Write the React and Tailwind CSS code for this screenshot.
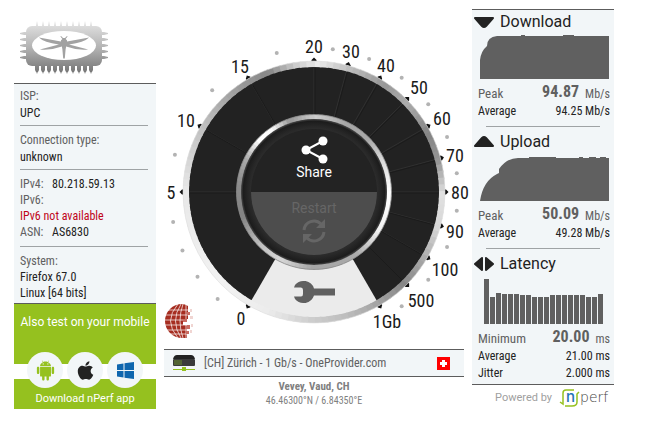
import { AiFillAndroid } from 'react-icons/ai';
import { FaApple } from 'react-icons/fa';

const CX = 150;
const CY = 192;

const gaugeLabels = [
  { text: '0', angle: 210, x: 77, y: 318 },
  { text: '5', angle: 270, x: 7, y: 192 },
  { text: '10', angle: 300, x: 22, y: 120 },
  { text: '15', angle: 330, x: 76, y: 66 },
  { text: '20', angle: 0, x: 150, y: 46 },
  { text: '30', angle: 15, x: 187, y: 51 },
  { text: '40', angle: 30, x: 222, y: 65 },
  { text: '50', angle: 45, x: 255, y: 87 },
  { text: '60', angle: 60, x: 278, y: 118 },
  { text: '70', angle: 75, x: 291, y: 155 },
  { text: '80', angle: 90, x: 296, y: 192 },
  { text: '90', angle: 105, x: 291, y: 231 },
  { text: '100', angle: 120, x: 281, y: 269 },
  { text: '500', angle: 135, x: 257, y: 300 },
  { text: '1Gb', angle: 150, x: 223, y: 321 },
];

const dotAngles = [222, 234, 246, 258, 285, 315, 345, 7.5, 22.5, 37.5, 52.5, 67.5, 82.5, 97.5, 112.5, 127.5, 142.5];

// [angle, grey level] stops, clockwise from the top
const outerStops = [[0, 236], [15, 190], [32, 150], [45, 172], [62, 132], [75, 150], [90, 225], [105, 215], [120, 170], [135, 135], [150, 165], [165, 190], [180, 205], [200, 236], [225, 242], [270, 232], [300, 190], [320, 160], [338, 135], [350, 200], [360, 236]];
const innerStops = [[0, 205], [25, 165], [45, 170], [65, 220], [90, 255], [120, 240], [145, 170], [180, 165], [205, 215], [225, 190], [250, 130], [275, 140], [295, 170], [312, 255], [325, 250], [340, 150], [360, 205]];

const latency = [45, 27, 31, 30, 30, 30, 29, 29, 27, 27, 27, 29, 29, 29, 29, 29, 29, 27, 27, 30];

function point(angle, r) {
  const a = (angle * Math.PI) / 180;
  return [CX + r * Math.sin(a), CY - r * Math.cos(a)];
}

function level(stops, angle) {
  const i = stops.findIndex(([a]) => a > angle);
  const [a0, v0] = stops[i - 1];
  const [a1, v1] = stops[i];
  return Math.round(v0 + ((v1 - v0) * (angle - a0)) / (a1 - a0));
}

function MetalRing({ r, width, stops }) {
  return [...Array(120)].map((_, i) => {
    const [x1, y1] = point(i * 3 - 0.4, r);
    const [x2, y2] = point(i * 3 + 3.4, r);
    const v = level(stops, i * 3);
    return <path key={i} d={`M${x1} ${y1}A${r} ${r} 0 0 1 ${x2} ${y2}`} stroke={`rgb(${v},${v},${v})`} strokeWidth={width} fill="none" />;
  });
}

function ChipLogo() {
  return (
    <svg width="92" height="60" viewBox="0 0 92 60" aria-label="Chip logo">
      <defs>
        <linearGradient id="chip" x1="0" y1="0" x2="0" y2="60" gradientUnits="userSpaceOnUse">
          <stop offset="0.1" stopColor="#dedede" />
          <stop offset="0.5" stopColor="#b0b0b0" />
          <stop offset="0.9" stopColor="#757575" />
        </linearGradient>
      </defs>
      <g fill="url(#chip)">
        {[...Array(10)].map((_, i) => (
          <path key={i} d={`M${18 + i * 6} 7l1 -5 1 5v45l-1 3 -1 -3zM${17 + i * 6} 47h4v4l-1 2h-2l-1 -2z`} />
        ))}
        {[...Array(5)].map((_, i) => (
          <path key={i} d={`M2 ${14 + i * 6}l4 -1h80l4 1v1l-4 1h-80l-4 -1z`} />
        ))}
        <rect x="8" y="7" width="76" height="40" rx="6" />
      </g>
      <ellipse cx="46" cy="26.500" rx="32" ry="14.500" fill="#fff" />
      <path d="M43 17l2 2h2l2-2 .6.500-2 2.500q2 1 1.500 2.500l22-4q-5 5-20 7l19 5q-11 1-22-3l-.5 3-.8 9h-1.600l-.8-9-.5-3q-11 4-22 3l19-5q-15-2-20-7l22 4q-.5-1.500 1.500-2.500l-2-2.500z" fill="#a2a2a2" />
    </svg>
  );
}

function Wrench() {
  return (
    <svg width="44" height="24" viewBox="0 0 44 24" fill="#606060">
      <path d="M3 5A11 11 0 0 1 22 8.500H43V15.500H22A11 11 0 0 1 3 19L2 16.500H9Q11 16.500 11 14V10Q11 7.500 9 7.500H2Z" />
    </svg>
  );
}

function Globe() {
  return (
    <g transform="translate(18 321)">
      <path d="M0-17A17 17 0 0 0 0 17H5V4H1V-2H6V-15Q3-17 0-17Z" fill="#a62d20" />
      <g stroke="#fff" strokeWidth="0.7" fill="none">
        <path d="M-18-11H9M-18-6H9M-18-1H9M-18 4H9M-18 9H9M-15 13H9" />
        <path d="M-4-17Q-19 0-4 17M-1-17Q-12 0-1 17M1-17Q-5 0 1 17M4-17V17" />
      </g>
      <path d="M1-2h4v3H1zM5-9h3v3H5zM5 4h3v4H5zM4 10h3v3H4z" fill="#c86c62" />
      <path d="M8-12h2v3H8zM8-5h3v3H8zM9 3h2v3H9zM8 9h2v3H8z" fill="#f0d5d2" />
    </g>
  );
}

function Gauge() {
  const [sx, sy] = point(150, 126);
  const [ex, ey] = point(210, 126);
  return (
    <div className="relative mx-auto w-[300px]">
      <svg className="block overflow-visible" width="300" height="349" viewBox="0 0 300 349">
        <defs>
          <linearGradient id="half" x1="0" x2="1">
            <stop offset="0" stopColor="#555" />
            <stop offset="0.4" stopColor="#888" />
            <stop offset="1" stopColor="#555" />
          </linearGradient>
          <radialGradient id="well" cx="150" cy="192" r="73" gradientUnits="userSpaceOnUse">
            <stop offset="0.84" stopColor="#2f2f2f" />
            <stop offset="0.9" stopColor="#272727" />
            <stop offset="0.97" stopColor="#1c1c1c" />
            <stop offset="1" stopColor="#4a4a4a" />
          </radialGradient>
        </defs>
        {gaugeLabels.map((l) => {
          const [x, y] = point(l.angle, 132);
          return (
            <g key={l.text}>
              <path d="M-2.500 0L0-2.500L2.500 0V3H-2.500Z" fill="#111" transform={`translate(${x} ${y}) rotate(${l.angle})`} />
              <text x={l.x} y={l.y + 7} textAnchor="middle" fill="#1a1a1a" className="font-['Roboto_Condensed',Roboto,sans-serif] text-[18px]">{l.text}</text>
            </g>
          );
        })}
        {dotAngles.map((a) => {
          const [x, y] = point(a, 144);
          return <circle key={a} cx={x} cy={y} r="2" fill="#b3b3b3" />;
        })}
        <circle cx={CX} cy={CY} r="127" fill="#222" />
        <path d={`M${CX} ${CY}L${sx} ${sy}A126 126 0 0 1 ${ex} ${ey}Z`} fill="#ebebeb" />
        {gaugeLabels.slice(1, -1).map((l) => {
          const [x, y] = point(l.angle, 125);
          return (
            <g key={l.text}>
              <path d={`M${CX} ${CY}L${x} ${y}`} stroke="#303030" />
              <path d={`M${CX + 1} ${CY + 1}L${x + 1} ${y + 1}`} stroke="#1b1b1b" />
            </g>
          );
        })}
        <MetalRing r={128} width={6} stops={outerStops} />
        <circle cx={CX} cy={CY} r="131" fill="none" stroke="#ddd" strokeWidth="0.6" />
        <MetalRing r={75} width={5} stops={innerStops} />
        <circle cx={CX} cy={CY} r="77.500" fill="none" stroke="#888" strokeWidth="0.8" />
        <circle cx={CX} cy={CY} r="73" fill="url(#well)" />
        <circle cx={CX} cy={CY} r="63" fill="#232323" />
        <path d="M87 192A63 63 0 0 0 213 192Z" fill="#4d4d4d" />
        <path d="M94 191.500H208" stroke="url(#half)" />
        <Globe />
      </svg>
      <button className="absolute left-1/2 top-[136px] flex w-24 -translate-x-1/2 flex-col items-center font-[Roboto,sans-serif] text-sm leading-4 text-white">
        <svg width="28" height="28" viewBox="0 0 28 28" fill="#fff">
          <path d="M23 5L6 14L23 23" fill="none" stroke="#fff" strokeWidth="2" />
          <circle cx="6" cy="14" r="4.500" />
          <circle cx="23" cy="5" r="4.500" />
          <circle cx="23" cy="23" r="4.500" />
        </svg>
        Share
      </button>
      <button className="absolute left-1/2 top-[200px] flex w-24 -translate-x-1/2 flex-col items-center gap-0.5 font-[Roboto,sans-serif] text-sm leading-4 text-[#666]">
        Restart
        <svg width="26" height="26" viewBox="0 0 26 26" fill="none" stroke="#666" strokeWidth="3">
          <path d="M3 12A10 10 0 0 1 20 6M23 14A10 10 0 0 1 6 20" />
          <path d="M24 1V10H15ZM2 25V16H11Z" fill="#666" stroke="none" />
        </svg>
      </button>
      <button aria-label="Settings" className="absolute left-1/2 top-[280px] -translate-x-1/2">
        <Wrench />
      </button>
    </div>
  );
}

function ServerBar() {
  return (
    <div className="flex h-7 items-center border-y border-[#5c5c5c] bg-[#f2f6f8] pl-2 pr-3.5">
      <svg width="24" height="18" viewBox="0 0 24 18">
        <path d="M5 1H19Q22 1 23 5H1Q2 1 5 1Z" fill="#222" />
        <rect x="1" y="5" width="22" height="7" rx="1" fill="#3b3b3b" />
        <path d="M3 6v5M5 6v5M7 6v5M9 6v5" stroke="#6c8f2c" />
        <path d="M1 15.500H23" stroke="#93c11f" />
        <rect x="10" y="13" width="4" height="4" fill="#93c11f" />
      </svg>
      <span className="ml-2 flex-1 text-xs text-[#606060]">[CH] Zürich - 1 Gb/s - OneProvider.com</span>
      <svg width="13" height="13" viewBox="0 0 13 13">
        <rect width="13" height="13" fill="#f00" />
        <path d="M5 3h3v2h2v3h-2v2h-3v-2h-2v-3h2z" fill="#fff" />
      </svg>
    </div>
  );
}

function Divider() {
  return <hr className="border-[#9fa3a5]" />;
}

function Stat({ label, value, unit, big }) {
  if (big) {
    return (
      <div className="flex h-[21px] items-center text-xs text-[#606060]">
        <span className="flex-1 pt-1 text-[13px]">{label}</span>
        <span className="mr-1.5 text-base font-bold">{value}</span>
        <span className="pt-1">{unit}</span>
      </div>
    );
  }
  return (
    <div className="flex h-[17px] items-center justify-between text-xs text-[#222]">
      <span>{label}</span>
      <span>{value} {unit}</span>
    </div>
  );
}

function Heading({ icon, children }) {
  return (
    <h2 className="flex h-6 items-center gap-1.5 pl-0.5 font-[Roboto,sans-serif] text-base text-[#222]">
      <svg width="20" height="16" viewBox="0 0 20 16" fill="#222" stroke="#222" strokeWidth="2" strokeLinejoin="round">
        <path d={icon} />
      </svg>
      {children}
    </h2>
  );
}

function StoreLink({ label, children }) {
  return (
    <a href="#" aria-label={label} className="flex size-9 items-center justify-center rounded-full bg-[#f2f6f8]">
      {children}
    </a>
  );
}

export default function App() {
  return (
    <main className="flex items-start gap-2 bg-white pl-3.5 pr-9 font-['Roboto_Condensed',Roboto,sans-serif] text-[#222]">
      {/* Connection info */}
      <aside className="w-[142px] shrink-0">
        <div className="flex h-[83px] items-end pb-1 pl-1">
          <ChipLogo />
        </div>
        <div className="border-y border-[#5c5c5c] bg-[#f2f6f8] pl-1.5 pr-2 text-xs leading-4">
          <div className="flex flex-col gap-px py-1">
            <p className="text-[#606060]">ISP:</p>
            <p>UPC</p>
          </div>
          <Divider />
          <div className="flex flex-col gap-px pb-1 pt-1.5">
            <p className="text-[#606060]">Connection type:</p>
            <p>unknown</p>
          </div>
          <Divider />
          <div className="py-1.5">
            <p><span className="inline-block w-8 text-[#606060]">IPv4:</span>80.218.59.13</p>
            <p className="text-[#606060]">IPv6:</p>
            <p className="text-[#c00418]">IPv6 not available</p>
            <p><span className="inline-block w-8 text-[#606060]">ASN:</span>AS6830</p>
          </div>
          <Divider />
          <div className="pb-0.5 pt-1.5">
            <p className="text-[#606060]">System:</p>
            <p>Firefox 67.0</p>
            <p>Linux [64 bits]</p>
          </div>
        </div>
        <div className="h-12 whitespace-nowrap bg-[#95c11f] pt-2 text-center font-[Roboto,sans-serif] text-xs leading-5 text-white">
          Also test on your mobile
        </div>
        <div className="bg-[linear-gradient(#95c11f_12px,#fff_12px,#fff_27px,#95c11f_27px)]">
          <div className="flex justify-center gap-1">
            <StoreLink label="Android"><AiFillAndroid size={23} color="#95c11f" /></StoreLink>
            <StoreLink label="iOS"><FaApple size={21} color="#222" /></StoreLink>
            <StoreLink label="Windows">
              <svg width="17" height="17" viewBox="0 0 17 17" fill="#0f66ae">
                <path d="M0 2.500L6.500 1.500V8H0ZM7.500 1.300L17 0V8H7.500ZM0 9H6.500V15.500L0 14.500ZM7.500 9H17V17L7.500 15.700Z" />
              </svg>
            </StoreLink>
          </div>
          <p className="pb-px pt-0.5 text-center font-[Roboto,sans-serif] text-[11px] leading-[18px] text-white">Download nPerf app</p>
        </div>
      </aside>

      {/* Speed gauge */}
      <section className="min-w-[300px] flex-1">
        <Gauge />
        <ServerBar />
        <div className="pt-0.5 text-center text-[#808080]">
          <p className="text-[11px] font-bold leading-4">Vevey, Vaud, CH</p>
          <p className="text-[10px] leading-3">46.46300°N / 6.84350°E</p>
        </div>
      </section>

      {/* Results */}
      <aside className="w-[142px] shrink-0 pt-[9px]">
        <div className="border-y border-[#5c5c5c] bg-[#f2f6f8]">
          <Heading icon="M1 4H19L12 12Q10 14 8 12Z">Download</Heading>
          <svg className="ml-2 block" width="129" height="45" viewBox="0 0 129 45" fill="#606060">
            <path d="M0 45V26Q1 17 7 12Q7 3 17 2H41V1H45V2H83V1H94V2H129V45Z" />
          </svg>
          <div className="pb-[7px] pl-1.5 pr-1 pt-0.5">
            <Stat label="Peak" value="94.87" unit="Mb/s" big />
            <Stat label="Average" value="94.25" unit="Mb/s" />
          </div>
          <div className="px-3.5"><Divider /></div>
          <div className="py-[3px]">
            <Heading icon="M1 12H19L12 4Q10 2 8 4Z">Upload</Heading>
          </div>
          <svg className="ml-2 block" width="129" height="44" viewBox="0 0 129 44" fill="#606060">
            <path d="M0 44Q3 24 17 17L19 16V12Q27 1 38 1H49V0H76V1H99V0H103V1H109V0H116V1H120V0H126V1H129V44Z" />
          </svg>
          <div className="pb-[7px] pl-1.5 pr-1 pt-0.5">
            <Stat label="Peak" value="50.09" unit="Mb/s" big />
            <Stat label="Average" value="49.28" unit="Mb/s" />
          </div>
          <div className="px-3.5"><Divider /></div>
          <div className="py-[3px]">
            <Heading icon="M1 8L8 2V14ZM19 8L12 2V14Z">Latency</Heading>
          </div>
          <svg className="ml-3 block" width="119" height="45" viewBox="0 0 119 45" fill="#606060">
            {latency.map((h, i) => (
              <rect key={i} x={i * 6} y={45 - h} width="5" height={h} />
            ))}
          </svg>
          <div className="pb-[3px] pl-1.5 pr-1 pt-0.5">
            <Stat label="Minimum" value="20.00" unit="ms" big />
            <Stat label="Average" value="21.00" unit="ms" />
            <Stat label="Jitter" value="2.000" unit="ms" />
          </div>
        </div>
        <a href="#" className="flex items-center justify-end gap-2 pr-px pt-1 font-[Roboto,sans-serif] text-[11px] text-[#a0a0a0]">
          Powered by
          <svg className="overflow-visible" width="53" height="18" viewBox="0 0 53 18">
            <path d="M0 13L3 15V4Q3 1 6 1H14M5 17H12Q17 17 17 13V5L19 3" fill="none" stroke="#95c11f" strokeWidth="1.500" />
            <text x="6" y="13" fill="#2273b5" className="font-[Inter,sans-serif] text-[15px] font-medium">n</text>
            <text x="20" y="13" fill="#444" className="font-['DejaVu_Sans',sans-serif] text-[14px] font-extralight">perf</text>
          </svg>
        </a>
      </aside>
    </main>
  );
}
